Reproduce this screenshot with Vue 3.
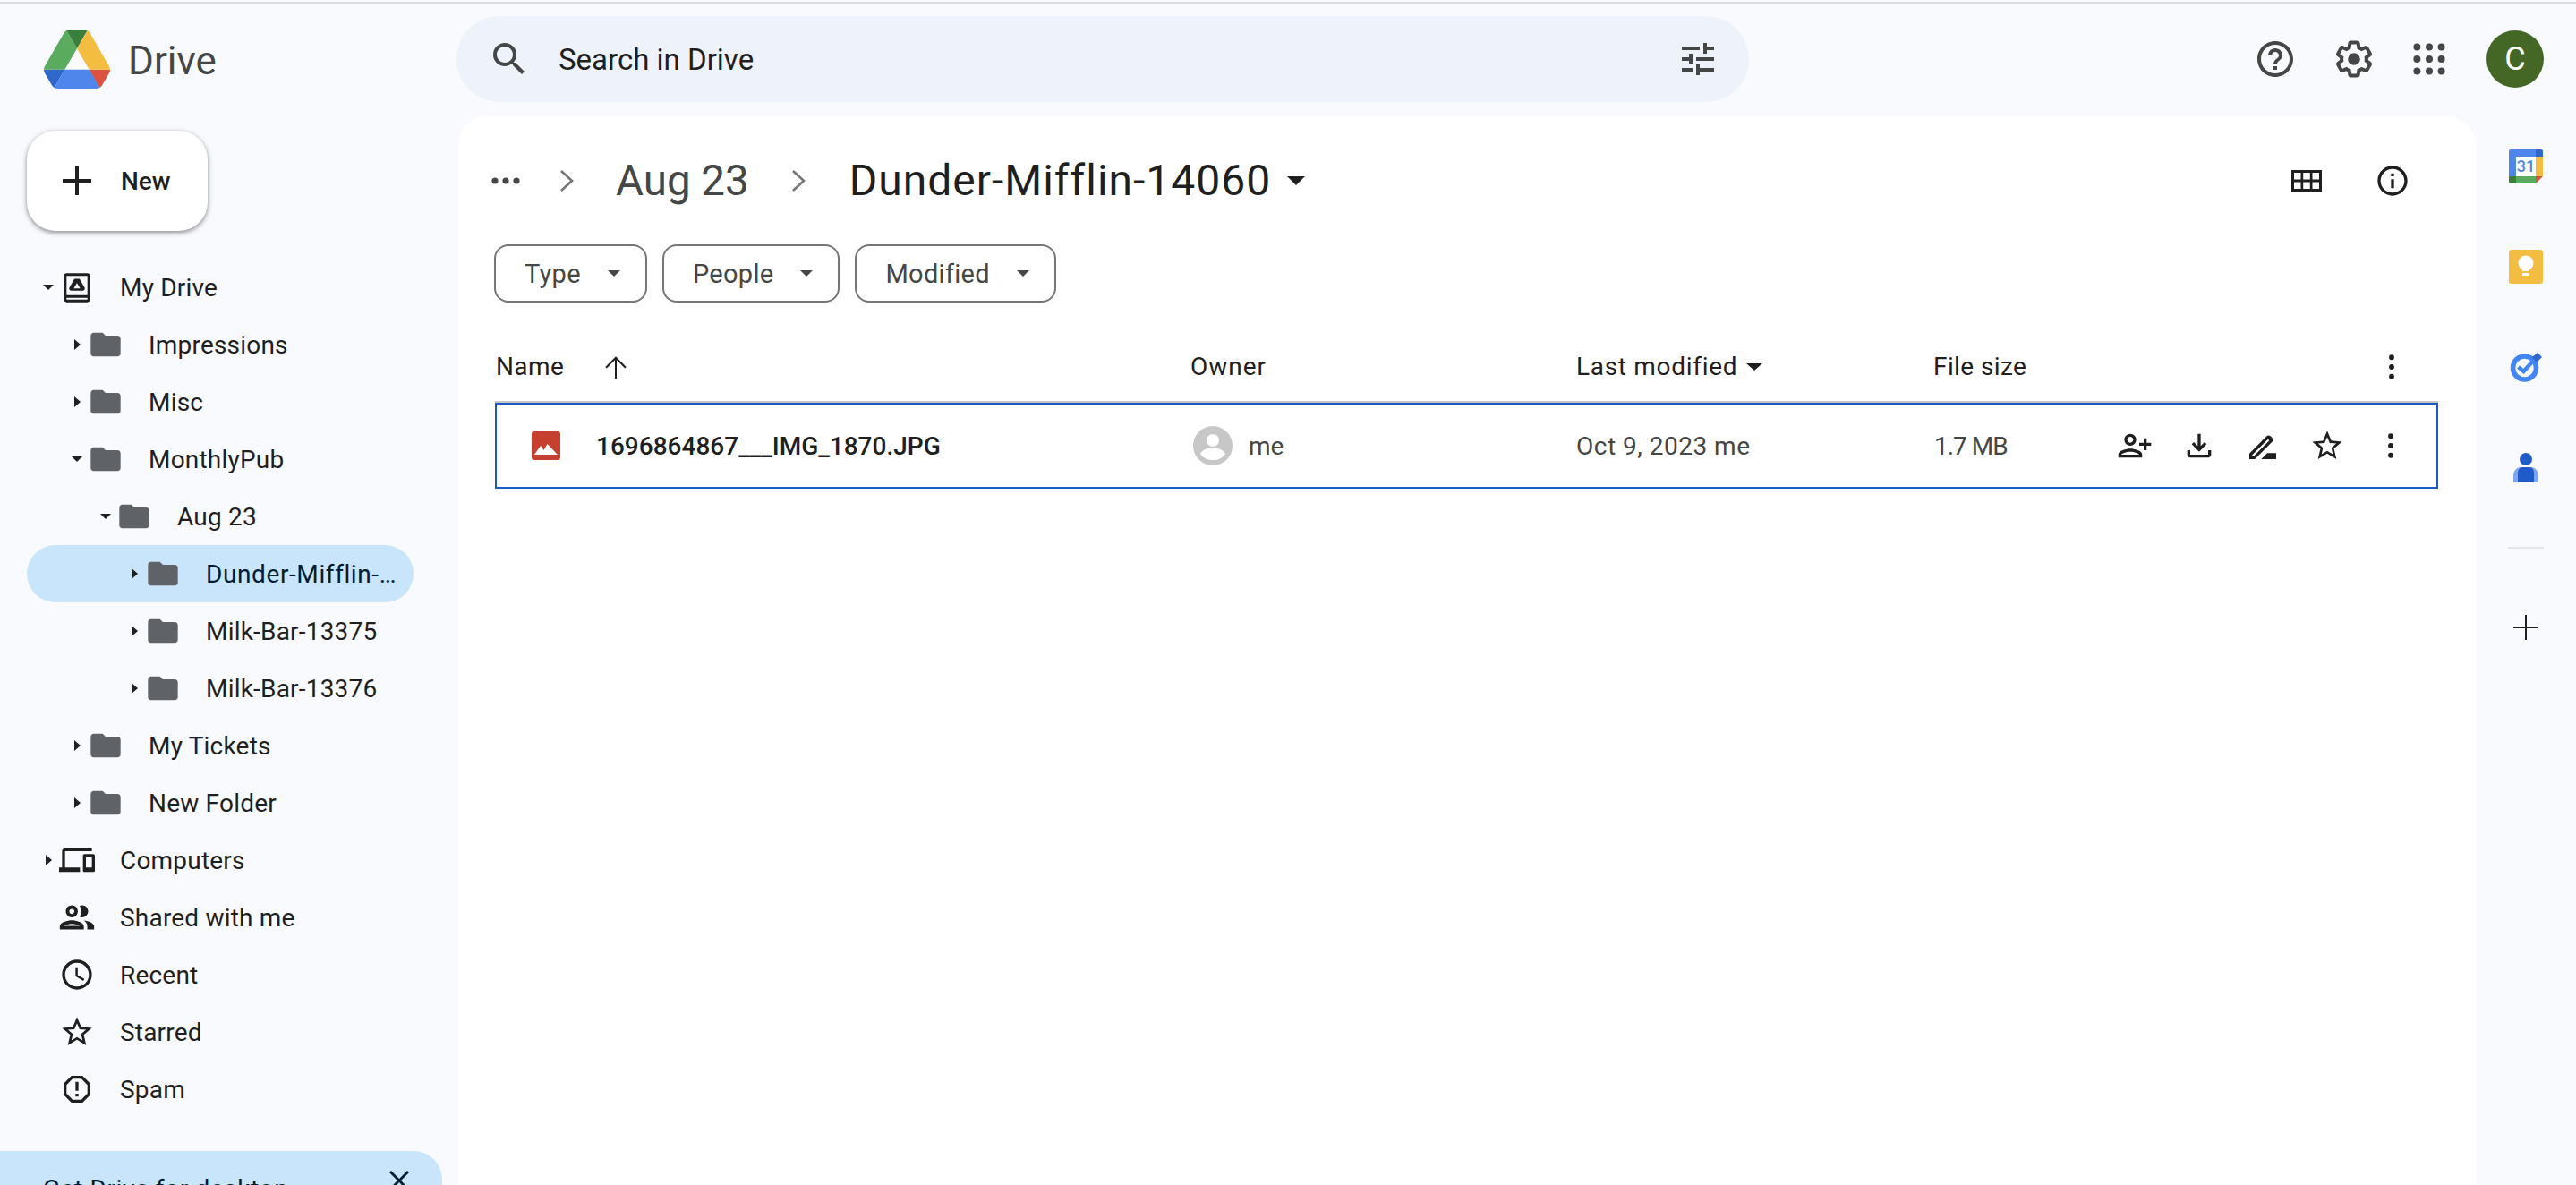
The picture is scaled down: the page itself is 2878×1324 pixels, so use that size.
<script setup>
const P = {
  folder: 'M10 4H4c-1.1 0-2 .9-2 2v12c0 1.1.9 2 2 2h16c1.1 0 2-.9 2-2V8c0-1.1-.9-2-2-2h-8l-2-2z',
  computers: 'M4 6h18V4H4c-1.1 0-2 .9-2 2v11H0v3h14v-3H4V6zm19 2h-6c-.55 0-1 .45-1 1v10c0 .55.45 1 1 1h6c.55 0 1-.45 1-1V9c0-.55-.45-1-1-1zm-1 9h-4v-7h4v7z',
  shared: 'M9 12c1.93 0 3.5-1.57 3.5-3.5S10.93 5 9 5 5.5 6.57 5.5 8.5 7.07 12 9 12zm0-5c.83 0 1.5.67 1.5 1.5S9.83 10 9 10s-1.5-.67-1.5-1.5S8.17 7 9 7zM9 13.75c-2.34 0-7 1.17-7 3.5V19h14v-1.75c0-2.33-4.66-3.5-7-3.5zM4.34 17c.84-.58 2.87-1.25 4.66-1.25s3.82.67 4.66 1.25H4.34zM16.04 13.81c1.16.84 1.96 1.96 1.96 3.44V19h4v-1.75c0-2.02-3.5-3.17-5.96-3.44zM15 12c1.93 0 3.5-1.57 3.5-3.5S16.93 5 15 5c-.54 0-1.04.13-1.5.35.63.89 1 1.98 1 3.15s-.37 2.26-1 3.15c.46.22.96.35 1.5.35z',
  recent: 'M11.99 2C6.47 2 2 6.48 2 12s4.47 10 9.99 10C17.52 22 22 17.52 22 12S17.52 2 11.99 2zM12 20c-4.42 0-8-3.58-8-8s3.58-8 8-8 8 3.58 8 8-3.58 8-8 8zm.5-13H11v6l5.25 3.15.75-1.23-4.5-2.67z',
  star: 'M22 9.24l-7.19-.62L12 2 9.19 8.63 2 9.24l5.46 4.73L5.82 21 12 17.27 18.18 21l-1.63-7.03L22 9.24zM12 15.4l-3.76 2.27 1-4.28-3.32-2.88 4.38-.38L12 6.1l1.71 4.04 4.38.38-3.32 2.88 1 4.28L12 15.4z',
  spam: 'M15.73 3H8.27L3 8.27v7.46L8.27 21h7.46L21 15.73V8.27L15.73 3zM19 14.9L14.9 19H9.1L5 14.9V9.1L9.1 5h5.8L19 9.1v5.8zM11 7h2v6h-2zM11 15h2v2h-2z',
  addPerson: 'M13 8c0-2.21-1.79-4-4-4S5 5.79 5 8s1.79 4 4 4 4-1.79 4-4zm-2 0c0 1.1-.9 2-2 2s-2-.9-2-2 .9-2 2-2 2 .9 2 2zM1 18v2h16v-2c0-2.66-5.33-4-8-4s-8 1.34-8 4zm2 0c.2-.71 3.3-2 6-2 2.69 0 5.77 1.28 6 2H3zm17-3v-3h3v-2h-3V7h-2v3h-3v2h3v3h2z',
  download: 'M18 15v3H6v-3H4v3c0 1.1.9 2 2 2h12c1.1 0 2-.9 2-2v-3h-2zm-1-4l-1.41-1.41L13 12.17V4h-2v8.17L8.41 9.59 7 11l5 5 5-5z',
  rename: 'M3 21v-3.75L14.5 5.75a2 2 0 0 1 2.83 0l.92.92a2 2 0 0 1 0 2.83L6.75 21H3zm2-2h.92L16.4 8.5l-.92-.92L5 18.08V19zM11 21l4-4h6v4z',
  kebab: 'M12 3.8a1.75 1.75 0 1 0 0 3.5 1.75 1.75 0 0 0 0-3.5zM12 10.25a1.75 1.75 0 1 0 0 3.5 1.75 1.75 0 0 0 0-3.5zM12 16.7a1.75 1.75 0 1 0 0 3.5 1.75 1.75 0 0 0 0-3.5z'
}
const tree = [
  { label: 'My Drive', level: 0, caret: 'down', icon: 'drive' },
  { label: 'Impressions', level: 1, caret: 'right', icon: 'folder' },
  { label: 'Misc', level: 1, caret: 'right', icon: 'folder' },
  { label: 'MonthlyPub', level: 1, caret: 'down', icon: 'folder' },
  { label: 'Aug 23', level: 2, caret: 'down', icon: 'folder' },
  { label: 'Dunder-Mifflin-14060', level: 3, caret: 'right', icon: 'folder', active: true },
  { label: 'Milk-Bar-13375', level: 3, caret: 'right', icon: 'folder' },
  { label: 'Milk-Bar-13376', level: 3, caret: 'right', icon: 'folder' },
  { label: 'My Tickets', level: 1, caret: 'right', icon: 'folder' },
  { label: 'New Folder', level: 1, caret: 'right', icon: 'folder' },
  { label: 'Computers', level: 0, caret: 'right', icon: 'computers' },
  { label: 'Shared with me', level: 0, icon: 'shared' },
  { label: 'Recent', level: 0, icon: 'recent' },
  { label: 'Starred', level: 0, icon: 'star' },
  { label: 'Spam', level: 0, icon: 'spam' }
]
const chips = ['Type', 'People', 'Modified']
const actions = ['addPerson', 'download', 'rename', 'star', 'kebab']
</script>

<template>
  <div class="app">
    <div class="topline"></div>
    <header class="header">
      <div class="brand">
        <svg class="logo" viewBox="0 0 87.3 78" preserveAspectRatio="none">
          <path d="m6.6 66.85 3.85 6.65c.8 1.4 1.95 2.5 3.3 3.3l13.75-23.8h-27.5c0 1.55.4 3.1 1.2 4.5z" fill="#2e68cc"/>
          <path d="m43.65 25-13.75-23.8c-1.35.8-2.5 1.9-3.3 3.3l-25.4 44a9.06 9.06 0 0 0-1.2 4.5h27.5z" fill="#5bab5f"/>
          <path d="m73.55 76.8c1.35-.8 2.5-1.9 3.3-3.3l1.6-2.75 7.65-13.25c.8-1.4 1.2-2.95 1.2-4.5h-27.502l5.852 11.5z" fill="#dc5240"/>
          <path d="m43.65 25 13.75-23.8c-1.35-.8-2.9-1.2-4.5-1.2h-18.5c-1.6 0-3.15.45-4.5 1.2z" fill="#3a7f3e"/>
          <path d="m59.8 53h-32.3l-13.75 23.8c1.35.8 2.9 1.2 4.5 1.2h50.8c1.6 0 3.15-.45 4.5-1.2z" fill="#4f86ec"/>
          <path d="m73.4 26.5-12.7-22c-.8-1.4-1.95-2.5-3.3-3.3l-13.75 23.8 16.15 28h27.45c0-1.55-.4-3.1-1.2-4.5z" fill="#f3bd42"/>
        </svg>
        <span class="brand-name">Drive</span>
      </div>
      <div class="search">
        <svg class="i48 dim" viewBox="0 0 24 24"><path d="M15.5 14h-.79l-.28-.27A6.471 6.471 0 0 0 16 9.5 6.5 6.5 0 1 0 9.5 16c1.61 0 3.09-.59 4.23-1.57l.27.28v.79l5 4.99L20.49 19l-4.99-5zm-6 0C7.01 14 5 11.99 5 9.5S7.01 5 9.5 5 14 7.01 14 9.5 11.99 14 9.5 14z"/></svg>
        <span class="search-text">Search in Drive</span>
        <svg class="i48 dim" viewBox="0 0 24 24"><path d="M3 17v2h6v-2H3zM3 5v2h10V5H3zm10 16v-2h8v-2h-8v-2h-2v6h2zM7 9v2H3v2h4v2h2V9H7zm14 4v-2H11v2h10zm-6-4h2V7h4V5h-4V3h-2v6z"/></svg>
      </div>
      <div class="tools">
        <svg class="i48 dim" viewBox="0 0 24 24"><path d="M11 18h2v-2h-2v2zm1-16C6.48 2 2 6.48 2 12s4.48 10 10 10 10-4.48 10-10S17.52 2 12 2zm0 18c-4.41 0-8-3.59-8-8s3.59-8 8-8 8 3.59 8 8-3.59 8-8 8zm0-14c-2.21 0-4 1.79-4 4h2c0-1.1.9-2 2-2s2 .9 2 2c0 2-3 1.75-3 5h2c0-2.25 3-2.5 3-5 0-2.21-1.79-4-4-4z"/></svg>
        <svg class="i48 dim" viewBox="0 0 24 24"><path d="M13.85 22.25h-3.7c-.74 0-1.36-.54-1.45-1.27l-.27-1.89c-.27-.14-.53-.29-.79-.46l-1.8.72c-.7.26-1.47-.03-1.81-.65L2.2 15.53c-.35-.66-.2-1.44.36-1.88l1.53-1.19c-.01-.15-.02-.3-.02-.46 0-.15.01-.31.02-.46l-1.52-1.19c-.59-.45-.74-1.26-.37-1.88l1.85-3.19c.34-.62 1.11-.9 1.79-.63l1.81.73c.26-.17.52-.32.78-.46l.27-1.91c.09-.7.71-1.25 1.44-1.25h3.7c.74 0 1.36.54 1.45 1.27l.27 1.89c.27.14.53.29.79.46l1.8-.72c.71-.26 1.48.03 1.82.65l1.84 3.18c.36.66.2 1.44-.36 1.88l-1.52 1.19c.01.15.02.3.02.46s-.01.31-.02.46l1.52 1.19c.56.45.72 1.23.37 1.86l-1.86 3.22c-.34.62-1.11.9-1.8.63l-1.8-.72c-.26.17-.52.32-.78.46l-.27 1.91c-.1.68-.72 1.22-1.46 1.22zm-3.23-2h2.76l.37-2.55.53-.22c.44-.18.88-.44 1.34-.78l.45-.34 2.38.96 1.38-2.4-2.03-1.58.07-.56c.03-.26.06-.51.06-.78s-.03-.53-.06-.78l-.07-.56 2.03-1.58-1.39-2.4-2.39.96-.45-.35c-.42-.32-.87-.58-1.33-.77l-.52-.22-.37-2.55h-2.76l-.37 2.55-.53.21c-.44.19-.88.44-1.34.79l-.45.33-2.38-.95-1.39 2.39 2.03 1.58-.07.56a7 7 0 0 0-.06.79c0 .26.02.53.06.78l.07.56-2.03 1.58 1.38 2.4 2.39-.96.45.35c.43.33.86.58 1.33.77l.53.22.38 2.55z"/><circle cx="12" cy="12" r="3.4"/></svg>
        <svg class="i48 dim apps" viewBox="0 0 24 24">
          <circle cx="5.2" cy="5.2" r="2"/><circle cx="12" cy="5.2" r="2"/><circle cx="18.8" cy="5.2" r="2"/>
          <circle cx="5.2" cy="12" r="2"/><circle cx="12" cy="12" r="2"/><circle cx="18.8" cy="12" r="2"/>
          <circle cx="5.2" cy="18.8" r="2"/><circle cx="12" cy="18.8" r="2"/><circle cx="18.8" cy="18.8" r="2"/>
        </svg>
        <div class="avatar">C</div>
      </div>
    </header>

    <div class="body">
      <aside class="sidebar">
        <button class="new-btn">
          <svg class="plus" viewBox="0 0 32 32"><path d="M14 0h4v14h14v4H18v14h-4V18H0v-4h14z"/></svg>
          <span>New</span>
        </button>
        <nav class="tree">
          <div v-for="item in tree" :key="item.label" class="row" :class="['level-' + item.level, { active: item.active }]">
            <span class="caret-box">
              <span v-if="item.caret" :class="'caret-' + item.caret"></span>
            </span>
            <span class="row-icon">
              <svg v-if="item.icon === 'drive'" class="i40" viewBox="0 0 24 24">
                <path d="M5 2.6h14c1 0 1.700.7 1.700 1.700v16c0 1-.7 1.700-1.700 1.700H5c-1 0-1.700-.7-1.700-1.700v-16c0-1 .7-1.700 1.700-1.700zm0 1.800v12.900h14V4.400H5zm0 14.700V20.200h14v-1.100H5z" fill-rule="evenodd"/>
                <path d="M10.300 6.300h3.400l3.400 5.900c.5.9-.1 2-1.100 2H8c-1 0-1.600-1.100-1.100-2l3.400-5.900zm1.700 2.900-2.200 3.600h4.400L12 9.200z" fill-rule="evenodd"/>
              </svg>
              <svg v-else-if="item.icon === 'folder'" class="i40 folder" viewBox="0 0 24 24"><path :d="P.folder"/></svg>
              <svg v-else-if="item.icon === 'shared'" class="i46" viewBox="0 0 24 24"><path :d="P.shared"/></svg>
              <svg v-else class="i40" viewBox="0 0 24 24"><path :d="P[item.icon]"/></svg>
            </span>
            <span class="row-label">{{ item.label }}</span>
          </div>
        </nav>
        <div class="promo">
          <span>Get Drive for desktop</span>
          <svg class="promo-close" viewBox="0 0 24 24"><path d="M1 3l2-2 9 9 9-9 2 2-9 9 9 9-2 2-9-9-9 9-2-2 9-9z"/></svg>
        </div>
      </aside>

      <main class="card">
        <div class="crumbs">
          <svg class="dots" viewBox="0 0 32 8"><circle cx="4" cy="4" r="3.6"/><circle cx="16" cy="4" r="3.6"/><circle cx="28" cy="4" r="3.6"/></svg>
          <svg class="chev" viewBox="0 0 16 24"><path d="M2 1l12 11L2 23" /></svg>
          <span class="crumb">Aug 23</span>
          <svg class="chev" viewBox="0 0 16 24"><path d="M2 1l12 11L2 23" /></svg>
          <span class="crumb current">Dunder-Mifflin-14060</span>
          <span class="title-caret"></span>
          <span class="grow"></span>
          <svg class="view-grid" viewBox="0 0 34 24"><path d="M0 0h34v24H0zM3 3v7.500h7.500V3zm10.200 0v7.500h7.600V3zM23.500 3v7.500H31V3zM3 13.500V21h7.500v-7.500zm10.200 0V21h7.600v-7.500zm10.300 0V21H31v-7.500z" fill-rule="evenodd"/></svg>
          <svg class="i40 info" viewBox="0 0 24 24"><path d="M11 7h2v2h-2zm0 4h2v6h-2zm1-9C6.48 2 2 6.48 2 12s4.48 10 10 10 10-4.48 10-10S17.52 2 12 2zm0 18c-4.41 0-8-3.59-8-8s3.59-8 8-8 8 3.59 8 8-3.59 8-8 8z"/></svg>
        </div>

        <div class="chips">
          <div v-for="chip in chips" :key="chip" class="chip">
            <span>{{ chip }}</span>
            <span class="chip-caret"></span>
          </div>
        </div>

        <div class="thead">
          <div class="name-head">
            <span>Name</span>
            <svg class="i40 sort" viewBox="0 0 24 24"><path d="M5 12l.9.9L11.400 7.400V20h1.200V7.400l5.500 5.500.9-.9-7-7z"/></svg>
          </div>
          <div class="owner-head">Owner</div>
          <div class="mod-head"><span>Last modified</span><span class="head-caret"></span></div>
          <div class="size-head">
            <span>File size</span>
            <svg class="i40" viewBox="0 0 24 24"><path :d="P.kebab"/></svg>
          </div>
        </div>

        <div class="trow">
          <div class="name-cell">
            <svg class="file-icon" viewBox="0 0 32 32">
              <rect width="32" height="32" rx="3" fill="#c5402f"/>
              <path d="M3 26l7-10 3.500 5 4-7L29 26z" fill="#fff"/>
            </svg>
            <span class="file-name">1696864867___IMG_1870.JPG</span>
          </div>
          <div class="owner-cell">
            <svg class="owner-avatar" viewBox="0 0 44 44">
              <circle cx="22" cy="22" r="22" fill="#c7c7c7"/>
              <circle cx="22" cy="16" r="7" fill="#fff"/>
              <path d="M8 31c3-5 9-7 14-7s11 2 14 7c-3 5-8 7-14 7S11 36 8 31z" fill="#fff"/>
            </svg>
            <span class="soft">me</span>
          </div>
          <div class="soft date">Oct 9, 2023 me</div>
          <div class="size-cell">
            <span class="soft file-size">1.7 MB</span>
            <div class="actions">
              <svg v-for="a in actions" :key="a" class="i40" viewBox="0 0 24 24"><path :d="P[a]"/></svg>
            </div>
          </div>
        </div>
      </main>

      <aside class="rail">
        <div class="rail-item">
          <svg class="rail-icon" viewBox="0 0 38 38">
            <path d="M2 0h28v8H8v22H0V2a2 2 0 0 1 2-2z" fill="#4f86ec"/>
            <path d="M30 0h6a2 2 0 0 1 2 2v6h-8z" fill="#2e68cc"/>
            <path d="M30 8h8v22h-8z" fill="#f3bd42"/>
            <path d="M8 30h22v8H8z" fill="#5bab5f"/>
            <path d="M0 30h8v8H2a2 2 0 0 1-2-2z" fill="#3a7f3e"/>
            <path d="M30 30h8l-8 8z" fill="#dc5240"/>
            <rect x="8" y="8" width="22" height="22" fill="#fff"/>
            <text x="19" y="25" text-anchor="middle" class="cal-text">31</text>
          </svg>
        </div>
        <div class="rail-item">
          <svg class="rail-icon" viewBox="0 0 38 38">
            <rect width="38" height="38" rx="3" fill="#f3bd42"/>
            <circle cx="19" cy="15" r="8.500" fill="#fff"/>
            <path d="M15 20h8v4h-8z" fill="#fff"/>
            <path d="M15 26h8v3h-8z" fill="#fff"/>
          </svg>
        </div>
        <div class="rail-item">
          <svg class="tasks" viewBox="0 0 36 34">
            <circle cx="16.500" cy="18" r="13" fill="none" stroke="#4285f4" stroke-width="5.500"/>
            <path d="M9.500 17l6 5L28 8" fill="none" stroke="#4285f4" stroke-width="4.500"/>
            <path d="M25 6l6-5 5 5-6 6z" fill="#2e68cc"/>
          </svg>
        </div>
        <div class="rail-item">
          <svg class="contacts" viewBox="0 0 28 33">
            <circle cx="14" cy="7" r="7" fill="#1f5cc9"/>
            <path d="M0 33v-8c0-5 4-9 8-9h12c4 0 8 4 8 9v8z" fill="#7fa6f2"/>
            <path d="M5 33V22c0-3 2-6 5-6h8c3 0 5 3 5 6v11z" fill="#1f5cc9"/>
          </svg>
        </div>
        <div class="rail-divider"></div>
        <svg class="rail-plus" viewBox="0 0 28 28"><path d="M13 0h2v13h13v2H15v13h-2V15H0v-2h13z"/></svg>
      </aside>
    </div>
  </div>
</template>

<style>
html, body { margin: 0; background: #f8fafd; }
</style>

<style scoped>
.app {
  width: 2878px;
  height: 1324px;
  overflow: hidden;
  background: #f8fafd;
  color: #1f1f1f;
  font-family: Roboto, "Liberation Sans", sans-serif;
  font-size: 28px;
  display: flex;
  flex-direction: column;
}
svg { display: block; flex: none; fill: currentColor; }
.i40 { width: 40px; height: 40px; }
.i46 { width: 46px; height: 46px; }
.i48 { width: 48px; height: 48px; }
.dim { color: #444746; }

.topline { height: 2px; margin-top: 2px; background: #dcdcdc; flex: none; }

.header { height: 126px; flex: none; display: flex; align-items: center; }
.brand { width: 510px; flex: none; display: flex; align-items: center; padding-left: 49px; box-sizing: border-box; height: 100%; padding-bottom: 2px; }
.logo { width: 74px; height: 66px; }
.brand-name { margin-left: 20px; margin-top: 3px; font-size: 44px; color: #444746; line-height: 1; }
.search {
  width: 1444px; height: 96px; flex: none; box-sizing: border-box;
  margin-bottom: 2px;
  border-radius: 48px; background: #eef3fb;
  display: flex; align-items: center; padding: 0 33px 0 35px;
}
.search-text { flex: 1; margin-left: 31px; font-size: 33px; color: #1f1f1f; }
.tools { flex: 1; display: flex; align-items: center; justify-content: flex-end; padding-right: 36px; gap: 40px; margin-bottom: 2px; }
.apps { margin-left: -4px; }
.avatar {
  width: 64px; height: 64px; border-radius: 50%; background: #446726; color: #fff;
  display: flex; align-items: center; justify-content: center; font-size: 36px;
}

.body { flex: 1; min-height: 0; display: flex; }
.sidebar { width: 512px; flex: none; display: flex; flex-direction: column; }
.new-btn {
  margin: 16px 0 0 30px; width: 202px; height: 112px; flex: none;
  border: 0; border-radius: 32px; background: #fff; color: #1f1f1f;
  box-shadow: 0 2px 6px rgba(60,64,67,.3), 0 2px 4px rgba(60,64,67,.35);
  display: flex; align-items: center; padding: 0 0 0 40px;
  font: 500 28px Roboto, "Liberation Sans", sans-serif;
}
.plus { width: 32px; height: 32px; margin-right: 33px; }
.tree { margin: 31px 0 0 30px; width: 432px; letter-spacing: .2px; }
.row { height: 64px; display: flex; align-items: center; border-radius: 32px; box-sizing: border-box; padding-right: 14px; }
.level-0 { padding-left: 12px; }
.level-1 { padding-left: 44px; }
.level-2 { padding-left: 76px; }
.level-3 { padding-left: 108px; }
.row.active { background: #c8e5fb; color: #001d35; letter-spacing: .6px; }
.caret-box { width: 24px; flex: none; display: flex; justify-content: center; }
.caret-right { width: 0; height: 0; border-left: 7px solid #1f1f1f; border-top: 6px solid transparent; border-bottom: 6px solid transparent; margin-left: 1px; }
.caret-down { width: 0; height: 0; border-top: 6px solid #1f1f1f; border-left: 6px solid transparent; border-right: 6px solid transparent; }
.row-icon { width: 40px; height: 40px; flex: none; display: flex; align-items: center; justify-content: center; }
.folder { color: #5f6368; }
.row-label { margin-left: 28px; white-space: nowrap; overflow: hidden; text-overflow: ellipsis; min-width: 0; }
.promo {
  margin-top: 37px; width: 494px; height: 120px; flex: none;
  background: #c8e5fb; border-top-right-radius: 32px; color: #001d35;
  position: relative; box-sizing: border-box; padding: 26px 0 0 48px; line-height: 34px; letter-spacing: .6px;
}
.promo-close { position: absolute; left: 434px; top: 21px; width: 24px; height: 24px; }

.card {
  flex: 1; min-width: 0; background: #fff; border-radius: 32px 32px 0 0;
  box-sizing: border-box; padding: 0 42px 0 40px;
}
.crumbs { height: 143px; display: flex; align-items: center; }
.dots { width: 32px; height: 8px; color: #444746; margin-left: -3px; }
.chev { width: 16px; height: 24px; fill: none; stroke: #757575; stroke-width: 2.6; margin-left: 44px; }
.crumb { font-size: 47.5px; color: #444746; margin-left: 47px; margin-right: 3px; white-space: nowrap; }
.crumb.current { font-size: 48px; color: #1f1f1f; margin-left: 49px; margin-right: 0; letter-spacing: 1px; }
.title-caret { width: 0; height: 0; border-top: 10px solid #1f1f1f; border-left: 10px solid transparent; border-right: 10px solid transparent; margin-left: 18px; }
.grow { flex: 1; }
.view-grid { width: 34px; height: 24px; margin-right: 59px; }
.info { margin-right: 31px; }
.chips { display: flex; gap: 17px; height: 65px; }
.chip {
  height: 65px; box-sizing: border-box; border: 2px solid #747775; border-radius: 16px;
  display: flex; align-items: center; padding: 0 28px 0 32px; color: #444746; font-size: 29px; letter-spacing: .3px;
}
.chip-caret { width: 0; height: 0; border-top: 7px solid #444746; border-left: 7px solid transparent; border-right: 7px solid transparent; margin-left: 30px; }
.thead { display: grid; align-items: center; margin-left: 1px; height: 79px; margin-top: 33px; box-sizing: border-box; padding-left: 1px; border-bottom: 2px solid #c7c7c7; grid-template-columns: 776px 431px 399px 1fr; letter-spacing: .4px; }
.owner-head { letter-spacing: 1px; }
.name-head, .mod-head, .size-head { display: flex; align-items: center; }
.mod-head { letter-spacing: .7px; }
.sort { margin-left: 38px; }
.head-caret { width: 0; height: 0; border-top: 8px solid #1f1f1f; border-left: 9px solid transparent; border-right: 9px solid transparent; margin-left: 10px; }
.size-head { justify-content: space-between; padding-right: 32px; }
.trow { display: grid; align-items: center; margin-left: 1px; height: 96px; box-sizing: border-box; border: 2px solid #1c5ac6; grid-template-columns: 778px 428px 400px 1fr; }
.name-cell { display: flex; align-items: center; padding-left: 39px; }
.file-icon { width: 32px; height: 32px; }
.file-name { margin-left: 40px; font-weight: 500; }
.owner-cell { display: flex; align-items: center; margin-left: 1px; }
.owner-avatar { width: 44px; height: 44px; margin-left: -1px; }
.owner-cell .soft { margin-left: 18px; }
.soft { color: #444746; }
.date { letter-spacing: .5px; }
.file-size { letter-spacing: -1px; }
.size-cell { display: flex; align-items: center; justify-content: space-between; padding-right: 31px; }
.actions { display: flex; gap: 31.5px; }

.rail { width: 112px; flex: none; display: flex; flex-direction: column; align-items: center; }
.rail-item { height: 112px; flex: none; display: flex; align-items: center; justify-content: center; }
.rail-icon { width: 38px; height: 38px; }
.cal-text { font: 500 18px Roboto, sans-serif; fill: #4f86ec; }
.tasks { width: 36px; height: 34px; }
.contacts { width: 28px; height: 33px; }
.rail-divider { width: 40px; height: 2px; background: #e3e5ea; margin-top: 33px; flex: none; }
.rail-plus { width: 28px; height: 28px; margin-top: 74px; color: #1f1f1f; }
</style>
